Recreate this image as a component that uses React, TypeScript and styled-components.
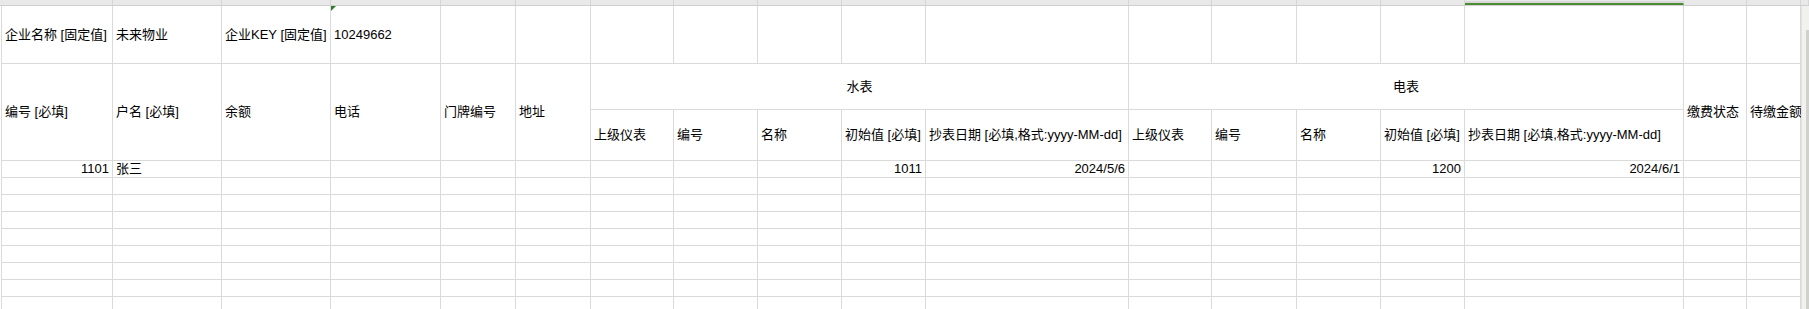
import styled, { createGlobalStyle } from 'styled-components';

const GlobalStyle = createGlobalStyle`
  html, body {
    margin: 0;
    padding: 0;
    background: #ffffff;
  }
  body {
    font-family: 'Liberation Sans', 'Noto Sans CJK SC', sans-serif;
    font-size: 13px;
    color: #000;
  }
`;

const COLS = [111, 109, 109, 110, 75, 75, 83, 84, 84, 84, 203, 83, 85, 84, 84, 219, 63];
const template = COLS.map((w) => `${w}px`).join(' ') + ' minmax(0, 1fr)';
const SELECTED_COL = 15;
const DATA_ROWS = 9;

const Page = styled.div`
  width: 1809px;
  height: 309px;
  overflow: hidden;
  display: flex;
  flex-direction: column;
`;

const ColumnHeader = styled.div`
  display: grid;
  grid-template-columns: ${template} 8px;
  height: 5px;
  border-bottom: 1px solid #cfcfcf;
  padding-left: 2px;
  background: #e9e9e9;
`;

const HeaderCell = styled.div<{ $selected?: boolean }>`
  border-right: 1px solid #d6d6d6;
  background: ${(p) => (p.$selected ? '#d9d9d9' : 'transparent')};
  border-bottom: ${(p) => (p.$selected ? '2px solid #4a8c34' : 'none')};
  margin-top: ${(p) => (p.$selected ? '1px' : '0')};
`;

const Body = styled.div`
  flex: 1;
  display: flex;
  min-height: 0;
`;

const Sheet = styled.div`
  flex: 1;
  min-width: 0;
  display: grid;
  grid-template-columns: ${template};
  grid-template-rows: 58px 46px 51px;
  grid-auto-rows: 17px;
  margin-left: 1px;
  border-left: 1px solid #dadada;
  overflow: hidden;
  align-content: start;
`;

const Cell = styled.div<{ $align?: 'left' | 'right' | 'center'; $span?: number; $rows?: number }>`
  position: relative;
  min-width: 0;
  grid-column: span ${(p) => p.$span ?? 1};
  grid-row: span ${(p) => p.$rows ?? 1};
  border-right: 1px solid #dadada;
  border-bottom: 1px solid #dadada;
  display: flex;
  align-items: center;
  justify-content: ${(p) =>
    p.$align === 'right' ? 'flex-end' : p.$align === 'center' ? 'center' : 'flex-start'};
  padding: 0 3px;
  white-space: nowrap;
  line-height: 14px;
`;

const TextMark = styled.span`
  position: absolute;
  top: 0;
  left: 0;
  width: 0;
  height: 0;
  border-top: 5px solid #2f7d26;
  border-right: 5px solid transparent;
`;

const ScrollTrack = styled.div`
  width: 7px;
  background: #f1f1ef;
  border-left: 1px solid #e2e2e2;
  display: flex;
  flex-direction: column;
  align-items: flex-end;
  padding-top: 24px;
`;

const ScrollThumb = styled.div`
  width: 3px;
  flex: 1;
  background: #d0d0cc;
`;

type Row = { text?: string; align?: 'left' | 'right' | 'center' }[];

const topRow: Row = [
  { text: '企业名称 [固定值]' },
  { text: '未来物业' },
  { text: '企业KEY [固定值]' },
  { text: '10249662' },
];

const mainHeads = ['编号 [必填]', '户名 [必填]', '余额', '电话', '门牌编号', '地址'];
const meterHeads = ['上级仪表', '编号', '名称', '初始值 [必填]', '抄表日期 [必填,格式:yyyy-MM-dd]'];

const dataRow: Row = [
  { text: '1101', align: 'right' },
  { text: '张三' },
  {}, {}, {}, {}, {}, {}, {},
  { text: '1011', align: 'right' },
  { text: '2024/5/6', align: 'right' },
  {}, {}, {},
  { text: '1200', align: 'right' },
  { text: '2024/6/1', align: 'right' },
  {}, {},
];

export default function App() {
  const colCount = COLS.length + 1;
  return (
    <Page>
      <GlobalStyle />
      <ColumnHeader>
        {Array.from({ length: colCount + 1 }).map((_, i) => (
          <HeaderCell key={i} $selected={i === SELECTED_COL} />
        ))}
      </ColumnHeader>
      <Body>
        <Sheet>
          {Array.from({ length: colCount }).map((_, i) => (
            <Cell key={`a${i}`}>
              {i === 3 && <TextMark />}
              {topRow[i]?.text}
            </Cell>
          ))}

          {mainHeads.map((h) => (
            <Cell key={h} $rows={2}>{h}</Cell>
          ))}
          <Cell $span={5} $align="center">水表</Cell>
          <Cell $span={5} $align="center">电表</Cell>
          <Cell $rows={2}>缴费状态</Cell>
          <Cell $rows={2}>待缴金额</Cell>
          {[...meterHeads, ...meterHeads].map((h, i) => (
            <Cell key={`m${i}`}>{h}</Cell>
          ))}

          {dataRow.map((c, i) => (
            <Cell key={`d${i}`} $align={c.align}>{c.text}</Cell>
          ))}
          {Array.from({ length: (DATA_ROWS - 1) * colCount }).map((_, i) => (
            <Cell key={`e${i}`} />
          ))}
        </Sheet>
        <ScrollTrack>
          <ScrollThumb />
        </ScrollTrack>
      </Body>
    </Page>
  );
}
